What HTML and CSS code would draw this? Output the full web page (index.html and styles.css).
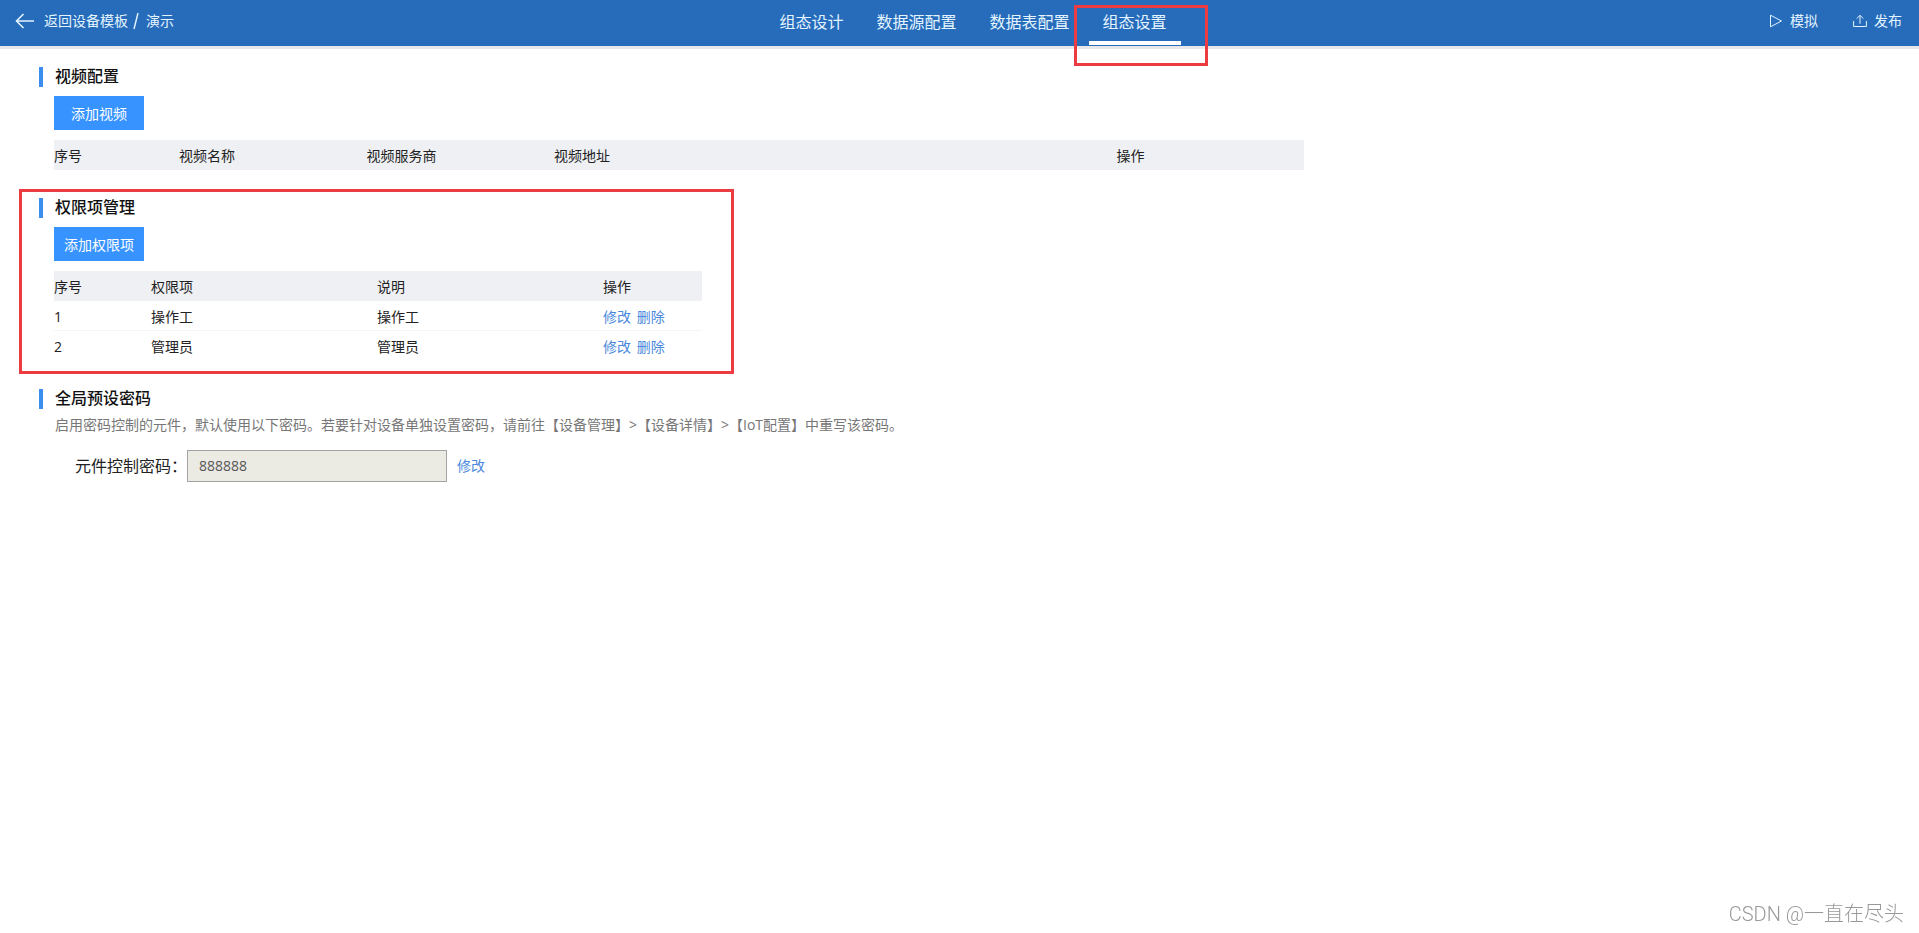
FILE: index.html
```html
<!DOCTYPE html>
<html lang="zh-CN">
<head>
<meta charset="utf-8">
<title>组态设置</title>
<link rel="stylesheet" href="styles.css">
</head>
<body>
<header class="topbar">
  <div class="crumbs">
    <a class="back" href="#">
      <svg class="back-icon" viewBox="0 0 20 16" aria-hidden="true"><path d="M19 8H1.500M8.500 1L1.500 8l7 7"/></svg>
      <span>返回设备模板</span>
    </a>
    <svg class="slash" viewBox="0 0 6 18" aria-hidden="true"><path d="M5 1L1 17"/></svg>
    <span>演示</span>
  </div>
  <nav class="tabs">
    <a class="tab" href="#">组态设计</a>
    <a class="tab" href="#">数据源配置</a>
    <a class="tab" href="#">数据表配置</a>
    <a class="tab tab-active" href="#" aria-current="page">组态设置<span class="tab-mark"></span></a>
  </nav>
  <div class="actions">
    <button class="action" type="button">
      <svg class="action-icon" viewBox="0 0 14 14" aria-hidden="true"><path d="M1.500 1.200v11.600L12.500 7z"/></svg>
      模拟
    </button>
    <button class="action" type="button">
      <svg class="action-icon" viewBox="0 0 14 14" aria-hidden="true"><path d="M.6 7v5.500h12.800V7M7 9.800V1.500M3.700 4.600L7 1.300l3.300 3.300"/></svg>
      发布
    </button>
  </div>
</header>

<main class="page">
  <section class="section">
    <h2 class="title">视频配置</h2>
    <div class="content">
      <button class="add" type="button">添加视频</button>
      <table class="table table-video">
        <colgroup><col class="w10"><col class="w15"><col class="w15"><col class="w45"><col class="w15"></colgroup>
        <thead>
          <tr><th>序号</th><th>视频名称</th><th>视频服务商</th><th>视频地址</th><th>操作</th></tr>
        </thead>
      </table>
    </div>
  </section>

  <section class="section section-marked">
    <h2 class="title">权限项管理</h2>
    <div class="content">
      <button class="add" type="button">添加权限项</button>
      <table class="table table-rights">
        <colgroup><col class="col-index"><col class="col-text"><col class="col-text"><col></colgroup>
        <thead>
          <tr><th>序号</th><th>权限项</th><th>说明</th><th>操作</th></tr>
        </thead>
        <tbody>
          <tr><td>1</td><td>操作工</td><td>操作工</td><td><a class="link" href="#">修改</a> <a class="link" href="#">删除</a></td></tr>
          <tr><td>2</td><td>管理员</td><td>管理员</td><td><a class="link" href="#">修改</a> <a class="link" href="#">删除</a></td></tr>
        </tbody>
      </table>
    </div>
  </section>

  <section class="section">
    <h2 class="title">全局预设密码</h2>
    <p class="hint">启用密码控制的元件，默认使用以下密码。若要针对设备单独设置密码，请前往【设备管理】&gt;【设备详情】&gt;【IoT配置】中重写该密码。</p>
    <div class="field">
      <label class="field-label" for="pwd">元件控制密码：</label>
      <input class="field-input" id="pwd" type="text" value="888888" disabled>
      <a class="link field-link" href="#">修改</a>
    </div>
  </section>
</main>

<div class="watermark">CSDN @一直在尽头</div>
</body>
</html>
```
FILE: styles.css
```css
*,
*::before,
*::after {
  box-sizing: border-box;
}

body {
  margin: 0;
  min-height: 100vh;
  background: #fff;
  color: #222;
  font: 14px/20px "Open Sans", "Noto Sans CJK SC", sans-serif;
}

a {
  color: inherit;
  text-decoration: none;
}

svg {
  fill: none;
  stroke: currentColor;
}

/* Top bar */
.topbar {
  display: grid;
  grid-template-columns: 1fr auto 1fr;
  height: 49px;
  border-bottom: 3px solid #e6e8ea;
  background: #266cbb;
  background-clip: padding-box;
  color: #e4f4ff;
}

.crumbs,
.actions {
  display: flex;
  align-items: center;
  height: 42px;
}

.crumbs {
  padding-left: 15px;
}

.back {
  display: flex;
  align-items: center;
  gap: 9px;
}

.back-icon {
  width: 20px;
  height: 16px;
  stroke-width: 1.6;
}

.slash {
  width: 6px;
  height: 18px;
  margin: 0 7px 0 5px;
  stroke-width: 1.4;
}

.tabs {
  display: flex;
  gap: 5px;
  padding-left: 27px;
}

.tab {
  position: relative;
  padding: 0 14px;
  font-size: 16px;
  line-height: 44px;
}

.tab-mark {
  position: absolute;
  left: 0;
  right: 0;
  bottom: 1px;
  height: 4px;
  background: #fff;
}

.tab-active::after {
  content: "";
  position: absolute;
  top: 5px;
  left: -15px;
  right: -27px;
  height: 61px;
  border: 3px solid #eb3c41;
  pointer-events: none;
}

.actions {
  justify-content: flex-end;
  gap: 35px;
  padding-right: 17px;
}

.action {
  display: flex;
  align-items: center;
  gap: 7px;
  padding: 0;
  border: 0;
  background: none;
  color: inherit;
  font: inherit;
}

.action-icon {
  width: 14px;
  height: 14px;
}

/* Sections */
.page {
  display: flex;
  flex-direction: column;
  gap: 28px;
  padding: 18px 39px;
}

.section {
  position: relative;
}

.section-marked::after {
  content: "";
  position: absolute;
  top: -9px;
  left: -20px;
  width: 715px;
  bottom: -13px;
  border: 3px solid #eb3c41;
  pointer-events: none;
}

.title {
  height: 20px;
  margin: 0;
  padding-left: 12px;
  border-left: 4px solid #3c8df0;
  color: #111;
  font-size: 16px;
  font-weight: 500;
  line-height: 18px;
}

.content {
  padding: 9px 0 0 15px;
}

.add {
  display: block;
  width: 90px;
  height: 34px;
  padding: 2px 0 0;
  border: 0;
  background: #3793ff;
  color: #fff;
  font: inherit;
}

.table {
  max-width: 100%;
  margin-top: 10px;
  border-collapse: separate;
  border-spacing: 0;
  table-layout: fixed;
}

.table-video {
  width: 1250px;
}

.table-rights {
  width: 648px;
}

.w10 { width: 10%; }
.w15 { width: 15%; }
.w45 { width: 45%; }
.col-index { width: 97px; }
.col-text { width: 226px; }

.table th,
.table td {
  height: 30px;
  padding: 2px 0 0;
  font-weight: 400;
  text-align: left;
}

.table th {
  background: #eef0f4;
}

.table td {
  border-bottom: 1px solid #f4f5f7;
}

.table tr:last-child td {
  border-bottom-color: transparent;
}

.link {
  color: #4a89dc;
}

.link + .link {
  margin-left: 2px;
}

.hint {
  margin: 0;
  padding: 6px 0 0 16px;
  color: #777;
}

.field {
  display: flex;
  align-items: center;
  margin-top: 15px;
  padding-left: 36px;
}

.field-label {
  font-size: 16px;
}

.field-input {
  width: 260px;
  height: 32px;
  padding: 0 11px 2px;
  border: 1px solid #a3a3a3;
  background: #ebebe4;
  color: #555;
  font: inherit;
}

.field-link {
  margin-left: 10px;
}

.watermark {
  position: fixed;
  right: 15px;
  bottom: 7px;
  color: #999;
  font: 300 20px/24px Roboto, "Noto Sans CJK SC", sans-serif;
}
```
